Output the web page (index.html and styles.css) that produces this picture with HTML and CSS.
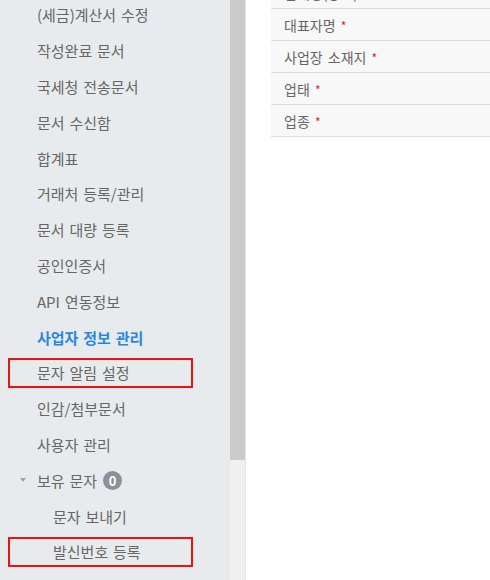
FILE: index.html
```html
<!DOCTYPE HTML>
<html>
<head>
    <meta charset="UTF-8">
    <title>사업자 정보 관리</title>
    <link rel="stylesheet" href="styles.css">
</head>
<body>
    <div class="layout">
        <!-- 왼쪽 메뉴 -->
        <aside class="sidebar">
            <ul class="menu">
                <li>(세금)계산서 수정</li>
                <li>작성완료 문서</li>
                <li>국세청 전송문서</li>
                <li>문서 수신함</li>
                <li>합계표</li>
                <li>거래처 등록/관리</li>
                <li>문서 대량 등록</li>
                <li>공인인증서</li>
                <li>API 연동정보</li>
                <li class="active">사업자 정보 관리</li>
                <li class="marked">문자 알림 설정</li>
                <li>인감/첨부문서</li>
                <li>사용자 관리</li>
                <li class="group"><span class="caret"></span>보유 문자<span class="badge">0</span></li>
                <li class="sub">문자 보내기</li>
                <li class="sub marked">발신번호 등록</li>
            </ul>
        </aside>
        <!-- 스크롤바 -->
        <div class="scrollbar"><div class="thumb"></div></div>
        <!-- 내용 -->
        <main class="content">
            <table class="info">
                <tr><th>업체명(상호) <em>*</em></th></tr>
                <tr><th>대표자명 <em>*</em></th></tr>
                <tr><th>사업장 소재지 <em>*</em></th></tr>
                <tr><th>업태 <em>*</em></th></tr>
                <tr><th>업종 <em>*</em></th></tr>
            </table>
        </main>
    </div>
</body>
</html>
```

FILE: styles.css
```css
body{margin:0;font-family:"Noto Sans CJK KR","Noto Sans",sans-serif;background:#fff;overflow:hidden;}
ul,li{margin:0;padding:0;list-style:none;}

.layout{
    display:flex;
    height:580px;
    overflow:hidden;
}
.sidebar{
    width:230px;
    flex:none;
    background-color:#e8ebee;
}
.menu{
    margin-top:-3px;
}
.menu li{
    position:relative;
    display:flex;
    align-items:center;
    height:35.8px;
    padding-left:37px;
    font-size:15px;
    word-spacing:1.5px;
    color:#666;
    white-space:nowrap;
}
.menu li.active{
    color:#2a86e2;
    font-weight:bold;
}
.menu li.sub{
    padding-left:53px;
}
.menu li.marked::after{
    content:'';
    position:absolute;
    left:8px;
    top:3px;
    width:181px;
    height:26px;
    border:2px solid #ee1111;
}
.menu .caret{
    position:absolute;
    left:20px;
    top:16px;
    border-left:3.5px solid transparent;
    border-right:3.5px solid transparent;
    border-top:4px solid #a0a4aa;
}
.menu .badge{
    display:inline-flex;
    justify-content:center;
    align-items:center;
    width:19px;
    height:19px;
    margin-left:6px;
    border-radius:50%;
    background-color:#8b909a;
    color:#fff;
    font-size:13px;
    font-weight:bold;
}

.scrollbar{
    width:15px;
    flex:none;
    background-color:#f0f0f0;
    border-right:1px solid #e6e6e6;
}
.scrollbar .thumb{
    height:460px;
    background-color:#cbcbcb;
}

.content{
    flex:1;
    padding-left:25px;
}
.info{
    width:100%;
    margin-top:-23px;
    border-collapse:collapse;
}
.info th{
    height:31px;
    padding:0 0 0 13px;
    border-bottom:1px solid #dedede;
    background-color:#f8f8f8;
    text-align:left;
    font-weight:normal;
    font-size:14px;
    word-spacing:2px;
    color:#666;
}
.info em{
    font-style:normal;
    color:#e02020;
    font-size:12px;
}
```
